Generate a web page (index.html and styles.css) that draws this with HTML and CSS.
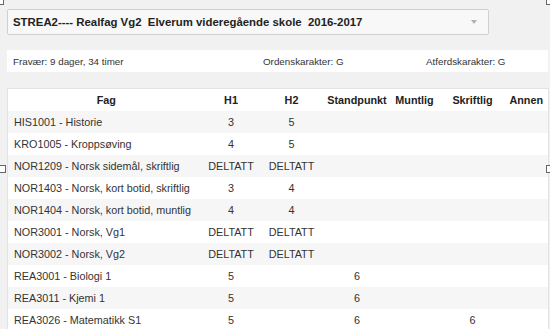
FILE: index.html
```html
<!DOCTYPE html>
<html>
<head>
<meta charset="utf-8">
<link rel="stylesheet" href="styles.css">
</head>
<body>
<div class="page">
  <div class="select">
    <span class="select-text">STREA2---- Realfag Vg2&nbsp; Elverum videregående skole&nbsp; 2016-2017</span>
    <span class="caret"></span>
  </div>
  <div class="info">
    <span>Fravær: 9 dager, 34 timer</span>
    <span>Ordenskarakter: G</span>
    <span>Atferdskarakter: G</span>
  </div>
  <table class="grades">
    <colgroup>
      <col class="c-fag"><col class="c-h1"><col class="c-h2"><col class="c-std"><col class="c-munt"><col class="c-skr"><col class="c-ann">
    </colgroup>
    <thead>
      <tr><th>Fag</th><th>H1</th><th>H2</th><th>Standpunkt</th><th>Muntlig</th><th>Skriftlig</th><th>Annen</th></tr>
    </thead>
    <tbody>
      <tr><td class="fag">HIS1001 - Historie</td><td>3</td><td>5</td><td></td><td></td><td></td><td></td></tr>
      <tr><td class="fag">KRO1005 - Kroppsøving</td><td>4</td><td>5</td><td></td><td></td><td></td><td></td></tr>
      <tr><td class="fag">NOR1209 - Norsk sidemål, skriftlig</td><td>DELTATT</td><td>DELTATT</td><td></td><td></td><td></td><td></td></tr>
      <tr><td class="fag">NOR1403 - Norsk, kort botid, skriftlig</td><td>3</td><td>4</td><td></td><td></td><td></td><td></td></tr>
      <tr><td class="fag">NOR1404 - Norsk, kort botid, muntlig</td><td>4</td><td>4</td><td></td><td></td><td></td><td></td></tr>
      <tr><td class="fag">NOR3001 - Norsk, Vg1</td><td>DELTATT</td><td>DELTATT</td><td></td><td></td><td></td><td></td></tr>
      <tr><td class="fag">NOR3002 - Norsk, Vg2</td><td>DELTATT</td><td>DELTATT</td><td></td><td></td><td></td><td></td></tr>
      <tr><td class="fag">REA3001 - Biologi 1</td><td>5</td><td></td><td>6</td><td></td><td></td><td></td></tr>
      <tr><td class="fag">REA3011 - Kjemi 1</td><td>5</td><td></td><td>6</td><td></td><td></td><td></td></tr>
      <tr><td class="fag">REA3026 - Matematikk S1</td><td>5</td><td></td><td>6</td><td></td><td>6</td><td></td></tr>
    </tbody>
  </table>
</div>
<span class="handle h-tl"></span>
<span class="handle h-tr"></span>
<span class="handle h-ml"></span>
<span class="handle h-mr"></span>
</body>
</html>
```

FILE: styles.css
```css
html, body {
  margin: 0;
  padding: 0;
  background: #f1f1f1;
  overflow: hidden;
}
body {
  width: 550px;
  height: 329px;
  position: relative;
  font-family: "Liberation Sans", Arial, sans-serif;
  color: #333;
}
.page {
  padding: 9px 0 0 7px;
  display: flex;
  flex-direction: column;
}
.select {
  height: 24px;
  border: 1px solid #cfcfcf;
  border-radius: 2px;
  background: #f8f8f8;
  display: flex;
  align-items: center;
  justify-content: space-between;
  padding: 0 10px 0 5px;
  box-sizing: content-box;
  width: 465px;
}
.select-text {
  font-weight: bold;
  font-size: 11.4px;
  color: #222;
}
.caret {
  width: 0;
  height: 0;
  border-left: 3.5px solid transparent;
  border-right: 3.5px solid transparent;
  border-top: 4px solid #b0b0b0;
  margin-right: 1px;
}
.info {
  margin-top: 15px;
  width: 541px;
  height: 22px;
  background: #fff;
  display: grid;
  grid-template-columns: 250px 163px 1fr;
  align-items: center;
  padding-left: 6px;
  box-sizing: border-box;
  font-size: 9.8px;
  color: #333;
}
.grades {
  margin-top: 16px;
  width: 541px;
  border-collapse: collapse;
  table-layout: fixed;
  background: #fff;
  border: 1px solid #e3e3e3;
  font-size: 10.8px;
}
.c-fag { width: 197px; }
.c-h1 { width: 53px; }
.c-h2 { width: 68px; }
.c-std { width: 63px; }
.c-munt { width: 52px; }
.c-skr { width: 64px; }
.c-ann { width: 44px; }
.grades th {
  height: 22px;
  font-weight: bold;
  font-size: 10.8px;
  color: #222;
  text-align: center;
  padding: 0;
}
.grades td {
  height: 22px;
  padding: 0;
  text-align: center;
  color: #333;
}
.grades td.fag {
  text-align: left;
  padding-left: 6px;
}
.grades tbody tr:nth-child(odd) {
  background: #f6f6f6;
}
.handle {
  position: absolute;
  width: 6px;
  height: 6px;
  border: 1px solid #666;
  background: #fff;
}
.h-tl { left: -4px; top: -3px; }
.h-tr { left: 546px; top: -3px; }
.h-ml { left: -2px; top: 165px; }
.h-mr { left: 546px; top: 165px; }
```
